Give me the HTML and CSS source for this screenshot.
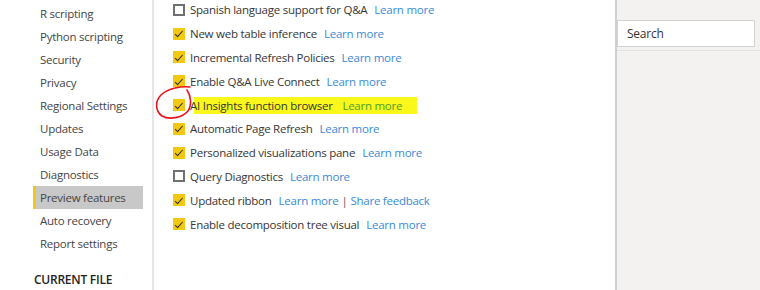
FILE: index.html
```html
<!doctype html>
<html lang="en">
  <head>
    <meta charset="UTF-8" />
    <title>Options - Preview features</title>
    <link rel="stylesheet" href="styles.css">
  </head>
  <body>
    <div class="window">
      <nav class="sidebar">
        <ul class="nav-list">
          <li>R scripting</li>
          <li>Python scripting</li>
          <li>Security</li>
          <li>Privacy</li>
          <li>Regional Settings</li>
          <li>Updates</li>
          <li>Usage Data</li>
          <li>Diagnostics</li>
          <li class="active">Preview features</li>
          <li>Auto recovery</li>
          <li>Report settings</li>
        </ul>
        <h2 class="section-title">CURRENT FILE</h2>
      </nav>

      <main class="options">
        <ul class="feature-list">
          <li><span class="box"></span>Spanish language support for Q&amp;A <a href="#">Learn more</a></li>
          <li><span class="box checked"></span>New web table inference <a href="#">Learn more</a></li>
          <li><span class="box checked"></span>Incremental Refresh Policies <a href="#">Learn more</a></li>
          <li><span class="box checked"></span>Enable Q&amp;A Live Connect <a href="#">Learn more</a></li>
          <li class="marked">
            <span class="box checked"></span><span class="highlight">AI Insights function browser <a href="#">Learn more</a></span>
            <!-- hand-drawn annotation around the checkbox -->
            <svg class="circle" width="40" height="36" viewBox="0 0 40 36">
              <path d="M36 2 C28 1 14 3 7 10 C1 16 1 26 8 31 C15 35 28 33 34 26 C38 20 37 11 33 5" fill="none" stroke="#e8141c" stroke-width="1.6" stroke-linecap="round"/>
            </svg>
          </li>
          <li><span class="box checked"></span>Automatic Page Refresh <a href="#">Learn more</a></li>
          <li><span class="box checked"></span>Personalized visualizations pane <a href="#">Learn more</a></li>
          <li><span class="box"></span>Query Diagnostics <a href="#">Learn more</a></li>
          <li><span class="box checked"></span>Updated ribbon <a href="#">Learn more</a><span class="sep">|</span><a class="tight" href="#">Share feedback</a></li>
          <li><span class="box checked"></span>Enable decomposition tree visual <a href="#">Learn more</a></li>
        </ul>
      </main>

      <aside class="right-pane">
        <div class="search-bar">
          <div class="search-box">Search</div>
        </div>
      </aside>
    </div>
  </body>
</html>
```

FILE: styles.css
```css
:root {
  --text-color: #363636;
  --nav-text: #454545;
  --link-color: #3a8ad8;
  --yellow: #f2c811;
  --border-light: #e6e6e6;
  --pane-bg: #f3f2f1;
}

* {
  margin: 0;
  padding: 0;
  box-sizing: border-box;
}

body {
  font-family: 'Open Sans', 'Noto Sans', sans-serif;
  font-size: 11.5px;
  letter-spacing: -0.25px;
  color: var(--text-color);
  background-color: white;
  overflow: hidden;
}

.window {
  display: flex;
  height: 290px;
}

ul {
  list-style: none;
}

/* left navigation */

.sidebar {
  width: 154px;
  padding: 2px 0 0 33px;
  border-right: 2px solid var(--border-light);
  flex-shrink: 0;
}

.nav-list li {
  height: 23px;
  line-height: 23px;
  padding-left: 7px;
  color: var(--nav-text);
  white-space: nowrap;
  margin-right: 9px;
}

.nav-list li.active {
  background-color: #c8c8c8;
  border-left: 3px solid var(--yellow);
  padding-left: 4px;
}

.section-title {
  margin-top: 15px;
  padding-left: 1px;
  font-size: 12px;
  font-weight: 600;
  line-height: 20px;
  color: #252423;
}

/* preview features list */

.options {
  width: 463px;
  padding: 0 0 0 19px;
  border-right: 2px solid #cfcfcf;
  flex-shrink: 0;
}

.feature-list {
  margin-top: -2px;
}

.feature-list li {
  position: relative;
  height: 23.8px;
  display: flex;
  align-items: center;
  white-space: nowrap;
}

.feature-list a {
  color: var(--link-color);
  text-decoration: none;
  margin-left: 7px;
}

.feature-list a.tight {
  margin-left: 0;
}

.sep {
  margin: 0 3px 0 3px;
  color: #555;
}

.box {
  width: 12px;
  height: 12px;
  margin-right: 5px;
  border: 2px solid #707070;
  background-color: white;
  flex-shrink: 0;
  position: relative;
}

.box.checked {
  border: none;
  background-color: var(--yellow);
}

.box.checked::after {
  content: '';
  position: absolute;
  left: 4px;
  top: 1.5px;
  width: 3px;
  height: 6.5px;
  border-right: 1.6px solid #2a2a2a;
  border-bottom: 1.6px solid #2a2a2a;
  transform: rotate(42deg);
}

/* highlighter stroke starts a little after the text */
.highlight {
  line-height: 17px;
  padding-right: 15px;
  background-image: linear-gradient(#f9f81a, #f9f81a);
  background-size: calc(100% - 4px) 100%;
  background-position: right top;
  background-repeat: no-repeat;
}

.highlight a {
  color: #4e9e35;
}

.circle {
  position: absolute;
  left: -19px;
  top: -8px;
}

/* right pane */

.right-pane {
  flex: 1;
  background-color: var(--pane-bg);
}

.search-bar {
  margin-top: 20px;
  padding-bottom: 3px;
  border-bottom: 1px solid #e2e2e2;
}

.search-box {
  width: 138px;
  height: 27px;
  padding-left: 9px;
  line-height: 25px;
  background-color: white;
  border: 1px solid #d2d2d2;
  color: #333;
  font-size: 12px;
}
```
